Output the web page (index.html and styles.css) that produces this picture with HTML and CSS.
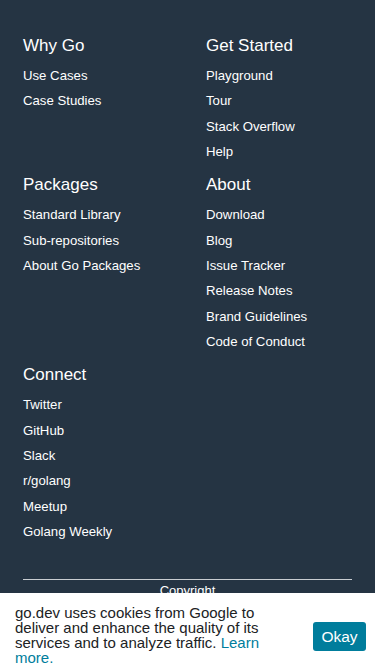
FILE: index.html
```html
<!DOCTYPE html>
<html lang="en">
<head>
    <meta charset="UTF-8">
    <meta name="viewport" content="width=device-width, initial-scale=1.0">
    <title>The Go Programming Language</title>
    <link rel="stylesheet" href="styles.css">
</head>
<body>

<footer class="site-footer">
    <div class="footer-grid">
        <div class="footer-section">
            <h3 class="footer-title">Why Go</h3>
            <ul class="footer-links">
                <li><a href="#">Use Cases</a></li>
                <li><a href="#">Case Studies</a></li>
            </ul>
        </div>
        <div class="footer-section">
            <h3 class="footer-title">Get Started</h3>
            <ul class="footer-links">
                <li><a href="#">Playground</a></li>
                <li><a href="#">Tour</a></li>
                <li><a href="#">Stack Overflow</a></li>
                <li><a href="#">Help</a></li>
            </ul>
        </div>
        <div class="footer-section">
            <h3 class="footer-title">Packages</h3>
            <ul class="footer-links">
                <li><a href="#">Standard Library</a></li>
                <li><a href="#">Sub-repositories</a></li>
                <li><a href="#">About Go Packages</a></li>
            </ul>
        </div>
        <div class="footer-section">
            <h3 class="footer-title">About</h3>
            <ul class="footer-links">
                <li><a href="#">Download</a></li>
                <li><a href="#">Blog</a></li>
                <li><a href="#">Issue Tracker</a></li>
                <li><a href="#">Release Notes</a></li>
                <li><a href="#">Brand Guidelines</a></li>
                <li><a href="#">Code of Conduct</a></li>
            </ul>
        </div>
        <div class="footer-section">
            <h3 class="footer-title">Connect</h3>
            <ul class="footer-links">
                <li><a href="#">Twitter</a></li>
                <li><a href="#">GitHub</a></li>
                <li><a href="#">Slack</a></li>
                <li><a href="#">r/golang</a></li>
                <li><a href="#">Meetup</a></li>
                <li><a href="#">Golang Weekly</a></li>
            </ul>
        </div>
    </div>
    <div class="footer-bottom">
        <a href="#">Copyright</a>
    </div>
</footer>

<div class="cookie-notice">
    <p class="cookie-text">go.dev uses cookies from Google to deliver and enhance the quality of its services and to analyze traffic. <a href="#">Learn more.</a></p>
    <button class="cookie-button">Okay</button>
</div>

</body>
</html>
```

FILE: styles.css
```css
body {
    font-family: 'Liberation Sans', Arial, sans-serif;
    margin: 0;
    padding: 0;
    background-color: #253443;
    color: #fff;
}

a {
    color: inherit;
    text-decoration: none;
}

.site-footer {
    padding: 36px 23px 0;
}

.footer-grid {
    display: grid;
    grid-template-columns: 1fr 1fr;
    column-gap: 37px;
    row-gap: 10.9px;
}

.footer-title {
    font-size: 17px;
    font-weight: normal;
    line-height: 20px;
    margin: 0 0 6.8px;
}

.footer-links {
    list-style: none;
    margin: 0;
    padding: 0;
}

.footer-links li {
    font-size: 13.2px;
    line-height: 25.4px;
}

.footer-bottom {
    margin-top: 34px;
    border-top: 1px solid #c9cdd1;
    padding-top: 3px;
    display: flex;
    justify-content: center;
    font-size: 13px;
    line-height: 16px;
    padding-bottom: 60px;
}

.cookie-notice {
    position: fixed;
    left: 0;
    right: 0;
    bottom: 0;
    background-color: #fff;
    display: flex;
    align-items: flex-start;
    gap: 40px;
    padding: 11.5px 9px 2.5px 15px;
}

.cookie-text {
    flex: 1;
    margin: 0;
    font-size: 15px;
    line-height: 15px;
    color: #202224;
}

.cookie-text a {
    color: #007d9c;
}

.cookie-button {
    width: 53px;
    height: 29px;
    margin-top: 17.5px;
    border: none;
    border-radius: 3px;
    background-color: #007d9c;
    color: #fff;
    font-family: inherit;
    font-size: 15.5px;
    padding: 0;
}
```
